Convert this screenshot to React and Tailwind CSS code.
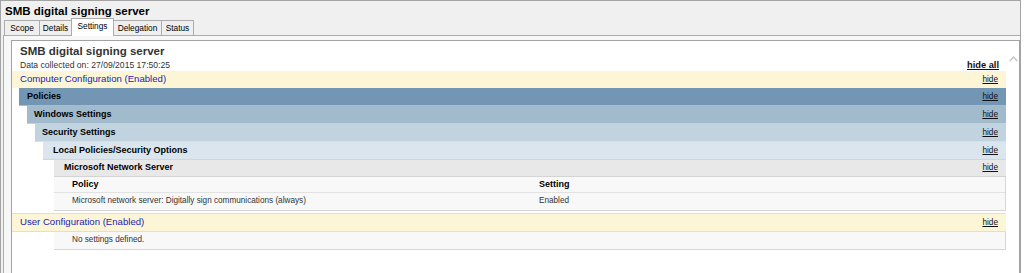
import React from "react";

const font = { fontFamily: '"Liberation Sans", Arial, sans-serif' };

function Hide() {
  return <span className="text-[8.25px] leading-[12px] underline text-[#111]">hide</span>;
}

export default function App() {
  return (
    <div className="w-[1024px] h-[273px] bg-white overflow-hidden" style={font}>
      <div className="w-[1021px] h-[273px] bg-[#f0f0f0] border-l border-t border-r border-[#a3a3a3] flex flex-col">
        {/* window title */}
        <div className="h-[19px] pt-[2px] pl-[4px] text-[11.5px] leading-[16px] font-bold text-black">
          SMB digital signing server
        </div>
        {/* tabs */}
        <div className="h-[15px] pl-[3px] flex items-start text-[8.3px] text-black">
          <div className="h-[15px] w-[36px] border border-b-0 border-[#acacac] bg-[#efefef] flex items-center justify-center">Scope</div>
          <div className="h-[15px] w-[33px] -ml-[1px] border border-b-0 border-[#acacac] bg-[#efefef] flex items-center justify-center">Details</div>
          <div className="relative z-10 h-[18px] w-[43px] -ml-[1px] -mt-[2px] border border-b-0 border-[#acacac] bg-white flex items-center justify-center pb-[2px]">Settings</div>
          <div className="h-[15px] w-[49px] -ml-[1px] border border-b-0 border-[#acacac] bg-[#efefef] flex items-center justify-center">Delegation</div>
          <div className="h-[15px] w-[33px] -ml-[1px] border border-b-0 border-[#acacac] bg-[#efefef] flex items-center justify-center">Status</div>
        </div>
        {/* tab panel */}
        <div className="flex-1 ml-[2px] border-t border-l border-[#acacac] bg-[#f7f7f7] pt-[4px] pl-[7px] flex flex-col">
          <div className="flex-1 bg-white border-t border-l border-r border-[#a3a3a3] flex">
            {/* content */}
            <div className="flex-1 min-w-0">
              <div className="pl-[8px] pt-[3px] text-[11.5px] leading-[14px] font-bold text-[#333]">
                SMB digital signing server
              </div>
              <div className="mt-[1px] h-[12px] pl-[8px] pr-[7px] flex items-end justify-between">
                <span className="text-[8.6px] leading-[12px] text-[#333]">Data collected on: 27/09/2015 17:50:25</span>
                <span className="text-[9.3px] leading-[12px] font-bold underline text-[#111]">hide all</span>
              </div>
              {/* computer configuration */}
              <div className="h-[17px] bg-[#fdf6d6] pl-[8px] pr-[8px] flex items-center justify-between">
                <span className="text-[9.6px] text-[#2222b4]">Computer Configuration (Enabled)</span>
                <Hide />
              </div>
              <div className="ml-[7px]">
                <div className="h-[18px] bg-[#7396b4] border-b border-[#a9bccc] pl-[8px] pr-[8px] flex items-center justify-between">
                  <span className="text-[9px] font-bold text-black">Policies</span>
                  <Hide />
                </div>
                <div className="ml-[8px]">
                  <div className="h-[18px] bg-[#a1bacc] border-b border-[#c3d1dc] pl-[7px] pr-[8px] flex items-center justify-between">
                    <span className="text-[9px] font-bold text-black">Windows Settings</span>
                    <Hide />
                  </div>
                  <div className="ml-[8px]">
                    <div className="h-[18px] bg-[#c1d3df] border-b border-[#d6e0e7] pl-[7px] pr-[8px] flex items-center justify-between">
                      <span className="text-[9px] font-bold text-black">Security Settings</span>
                      <Hide />
                    </div>
                    <div className="ml-[8px]">
                      <div className="h-[18px] bg-[#dbe5ed] border-b border-[#cfd6dc] pl-[10px] pr-[8px] flex items-center justify-between">
                        <span className="text-[9px] font-bold text-black">Local Policies/Security Options</span>
                        <Hide />
                      </div>
                      <div className="ml-[11px]">
                        <div className="h-[17px] bg-[#e8e8e8] border-b border-[#d4d4d4] pl-[10px] pr-[8px] flex items-center justify-between">
                          <span className="text-[9px] font-bold text-black">Microsoft Network Server</span>
                          <Hide />
                        </div>
                        <div className="bg-[#f8f8f8] border-r border-b border-[#d6d6d6]">
                          <div className="h-[16px] pl-[18px] grid grid-cols-[467px_1fr] items-center border-b border-[#e2e2e2] text-[9px] font-bold text-black">
                            <div>Policy</div>
                            <div>Setting</div>
                          </div>
                          <div className="h-[17px] pl-[18px] grid grid-cols-[467px_1fr] items-center text-[8.2px] text-[#333]">
                            <div>Microsoft network server: Digitally sign communications (always)</div>
                            <div>Enabled</div>
                          </div>
                        </div>
                      </div>
                    </div>
                  </div>
                </div>
              </div>
              {/* user configuration */}
              <div className="mt-[2px] h-[19px] bg-[#fdf6d6] border-t border-b border-[#dedede] pl-[8px] pr-[8px] flex items-center justify-between">
                <span className="text-[9.6px] text-[#2222b4]">User Configuration (Enabled)</span>
                <Hide />
              </div>
              <div className="ml-[42px] h-[18px] bg-[#f8f8f8] border-r border-b border-[#d6d6d6] pl-[18px] flex items-center">
                <span className="text-[8.2px] text-[#333]">No settings defined.</span>
              </div>
            </div>
            {/* scrollbar */}
            <div className="w-[13px] pt-[14px] pl-[3px]">
              <svg width="9" height="7" viewBox="0 0 9 7">
                <polyline points="0.8,6 4.5,2 8.2,6" fill="none" stroke="#c4c4c4" strokeWidth="1.4" />
              </svg>
            </div>
          </div>
        </div>
      </div>
    </div>
  );
}
